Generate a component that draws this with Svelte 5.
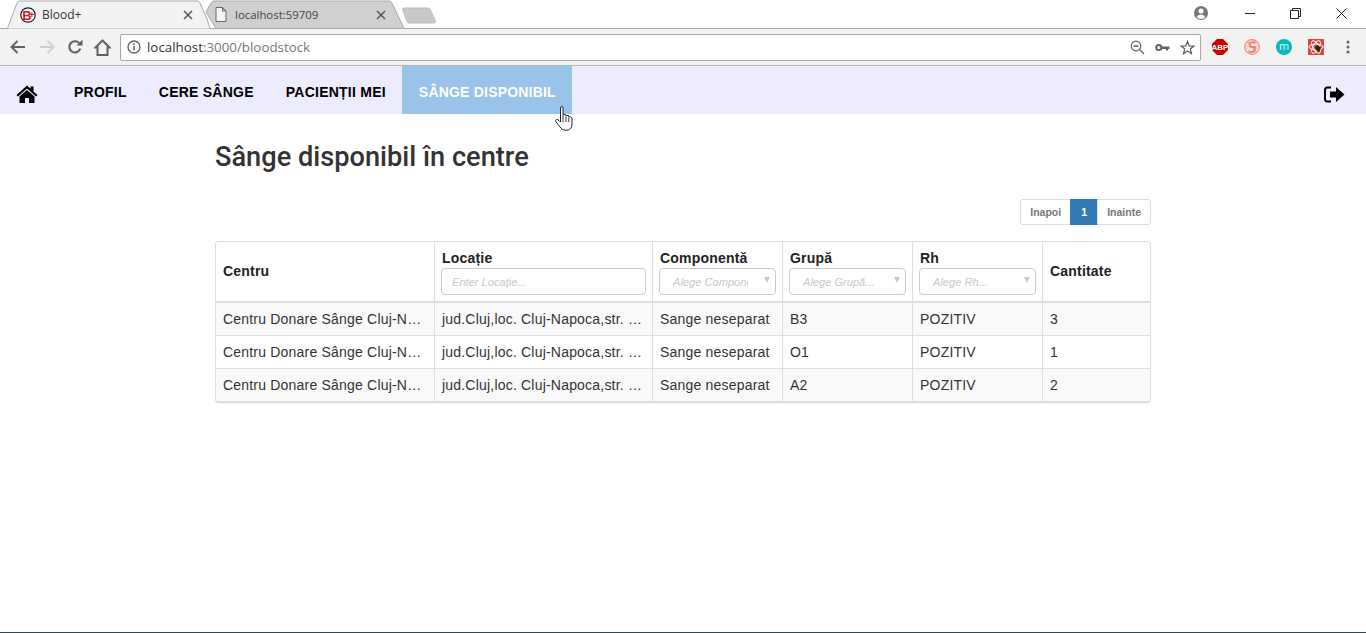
<script>
  const rows = [
    { g: 'B3', q: '3' },
    { g: 'O1', q: '1' },
    { g: 'A2', q: '2' }
  ];
</script>

<div class="page">
  <div class="strip">
    <div class="tab first">
      <svg class="tabbg" width="206" height="29" viewBox="0 0 206 29"><path d="M0 28.5H1.5L11 3Q12 1 14 1H191Q193 1 194 3L201 19L204 28.5H206" fill="#f2f2f2" stroke="#a8a8a8"/></svg>
      <svg class="fav" width="16" height="16" viewBox="0 0 16 16"><circle cx="8" cy="8" r="7.200" fill="#fff" stroke="#1a1a1a" stroke-width="1.200"/><text x="2.200" y="12.500" class="favb">B</text><text x="9.200" y="11" class="favp">+</text></svg>
      <span class="title">Blood+</span>
      <svg class="close" width="10" height="10" viewBox="0 0 10 10"><path d="M1 1L9 9M9 1L1 9" stroke="#555" stroke-width="1.5"/></svg>
    </div>
    <div class="tab second">
      <svg class="tabbg" width="204" height="29" viewBox="0 0 204 29"><path d="M3 12L8 3Q9 1 11 1H186Q188 1 189 3L201 28.5H13Z" fill="#cfcfcf" stroke="#a8a8a8"/></svg>
      <svg class="fav doc" width="12" height="15" viewBox="0 0 12 15"><path d="M1 .5H7.5L11 4V14.5H1ZM7.5 .5V4H11" fill="#f4f4f4" stroke="#666"/></svg>
      <span class="title">localhost:59709</span>
      <svg class="close" width="10" height="10" viewBox="0 0 10 10"><path d="M1 1L9 9M9 1L1 9" stroke="#555" stroke-width="1.5"/></svg>
    </div>
    <svg class="newtab" width="36" height="17" viewBox="0 0 36 17"><path d="M1.5 2Q1.5 1 3 1H27Q28.500 1 29 2L34.500 14Q35 16 33 16H8Q6.500 16 6 15Z" fill="#c9c9c9" stroke="#bdbdbd"/></svg>
    <div class="winctl">
      <svg class="acct" width="16" height="16" viewBox="0 0 16 16"><circle cx="8" cy="8" r="7" fill="#777"/><circle cx="8" cy="6" r="2.500" fill="#fff"/><path d="M3.500 12Q5 9.500 8 9.500T12.500 12Q10.500 14 8 14T3.500 12Z" fill="#fff"/></svg>
      <svg class="min" width="11" height="11" viewBox="0 0 11 11"><path d="M0 5.500H10" stroke="#222"/></svg>
      <svg class="max" width="11" height="11" viewBox="0 0 11 11"><path d="M.5 2.500H8.500V10.500H.5ZM2.500 2.500V.5H10.500V8.500H8.500" fill="none" stroke="#222"/></svg>
      <svg class="x" width="11" height="11" viewBox="0 0 11 11"><path d="M.5 .5L10.500 10.500M10.500 .5L.5 10.500" stroke="#222"/></svg>
    </div>
  </div>

  <div class="toolbar">
    <svg class="back" width="16" height="14" viewBox="0 0 16 14"><path d="M15 7H2M7.500 1L1.500 7L7.500 13" fill="none" stroke="#5f6368" stroke-width="2"/></svg>
    <svg class="fwd" width="16" height="14" viewBox="0 0 16 14"><path d="M1 7H14M8.500 1L14.500 7L8.500 13" fill="none" stroke="#cfcfcf" stroke-width="2"/></svg>
    <svg class="reload" width="16" height="16" viewBox="0 0 16 16"><path d="M13.300 9.500A5.600 5.600 0 1 1 12 4" fill="none" stroke="#5f6368" stroke-width="2.200"/><path d="M9.500 6.500H15.500V.5Z" fill="#5f6368"/></svg>
    <svg class="home" width="17" height="17" viewBox="0 0 17 17"><path d="M8.500 1.500L15.500 8.500H13.500V16H3.500V8.500H1.500Z" fill="none" stroke="#5f6368" stroke-width="2" stroke-linejoin="miter"/></svg>
    <div class="omni">
      <svg class="info" width="14" height="14" viewBox="0 0 14 14"><circle cx="7" cy="7" r="6" fill="none" stroke="#5f6368" stroke-width="1.300"/><path d="M7 6V10.500M7 3.300V5" stroke="#5f6368" stroke-width="1.500"/></svg>
      <span class="url"><b>localhost</b>:3000/bloodstock</span>
      <svg class="zoomout" width="15" height="15" viewBox="0 0 15 15"><circle cx="6" cy="6" r="4.800" fill="none" stroke="#5f6368" stroke-width="1.200"/><path d="M3.500 6H8.500M9.500 9.500L14 14" stroke="#5f6368" stroke-width="1.300"/></svg>
      <svg class="key" width="15" height="9" viewBox="0 0 15 9"><circle cx="3.800" cy="4.500" r="2.600" fill="none" stroke="#5f6368" stroke-width="2"/><path d="M6 3.500H14.500V6H13V7.500H11V6H6Z" fill="#5f6368"/></svg>
      <svg class="star" width="15" height="15" viewBox="0 0 15 15"><path d="M7.500 1.500L9.200 5.800L13.800 6.100L10.300 9L11.400 13.500L7.500 11L3.600 13.500L4.700 9L1.200 6.100L5.800 5.800Z" fill="none" stroke="#5f6368" stroke-width="1.300"/></svg>
    </div>
    <svg class="ext abp" width="16" height="16" viewBox="0 0 16 16"><path d="M5 0H11L16 5V11L11 16H5L0 11V5Z" fill="#c00"/><text x="8" y="10.800" text-anchor="middle" class="abptext">ABP</text></svg>
    <svg class="ext" width="16" height="16" viewBox="0 0 16 16"><circle cx="8" cy="8" r="7.300" fill="#fde4df" stroke="#ee8878" stroke-width="1.200"/><circle cx="8" cy="8" r="5" fill="none" stroke="#f6b9ae" stroke-width=".8"/><path d="M11.500 3.500Q6 2.500 5.500 5.500T9 8T10 12Q8 14 4.500 12.500" fill="none" stroke="#ee7c6c" stroke-width="1.800"/><path d="M4 3L12 13" stroke="#ee8878"/></svg>
    <svg class="ext" width="16" height="16" viewBox="0 0 16 16"><circle cx="8" cy="8" r="8" fill="#0bb8b8"/><text x="8" y="11" text-anchor="middle" class="mtext">m</text></svg>
    <svg class="ext" width="16" height="16" viewBox="0 0 16 16"><rect width="16" height="16" fill="#da4a36"/><g fill="none" stroke="#fff" stroke-width="1"><ellipse cx="8" cy="8" rx="7" ry="3"/><ellipse cx="8" cy="8" rx="7" ry="3" transform="rotate(60 8 8)"/><ellipse cx="8" cy="8" rx="7" ry="3" transform="rotate(120 8 8)"/></g><path d="M7 8L10 6L13 9L11 13L8 11Z" fill="#2a2320"/></svg>
    <svg class="menu" width="4" height="14" viewBox="0 0 4 14"><circle cx="2" cy="2" r="1.500" fill="#5f6368"/><circle cx="2" cy="7" r="1.500" fill="#5f6368"/><circle cx="2" cy="12" r="1.500" fill="#5f6368"/></svg>
  </div>

  <nav class="nav">
    <a class="homelink" href="#top" aria-label="Acasă">
      <svg width="22" height="18" viewBox="0 0 22 18"><path d="M11 .5L14.500 3.700V1.500H17.500V6.400L21.500 10L20 11.500L11 3.500L2 11.500L.5 10Z" fill="#000"/><path d="M11 5L18.500 11.500V18H13V13H9V18H3.500V11.500Z" fill="#000"/></svg>
    </a>
    <a href="#top">PROFIL</a>
    <a href="#top">CERE SÂNGE</a>
    <a href="#top">PACIENȚII MEI</a>
    <a class="active" href="#top">SÂNGE DISPONIBIL</a>
    <a class="logout" href="#top" aria-label="Ieșire">
      <svg width="21" height="17" viewBox="0 0 21 17"><path d="M7 1.500H3.500Q1 1.500 1 4V13Q1 15.500 3.500 15.500H7" fill="none" stroke="#000" stroke-width="2"/><path d="M6 5.500H12V1L20.500 8.500L12 16V11.500H6Z" fill="#000"/></svg>
    </a>
    <svg class="cursor" width="18" height="25" viewBox="0 0 18 25"><path d="M5.500 2Q5.500 .5 6.800 .5T8 2V9.500Q8.500 8 10 8.500T11 10Q11.500 9 13 9.500T13.800 11Q14.500 10.500 15.800 11T17 13V18Q17 24 11 24.300Q7 24.500 5 21L.8 15.500Q.2 14 1.500 13.500T4 14.500L5.500 16Z" fill="#fff" stroke="#1c2230" stroke-width="1"/><path d="M8 10V16M11 10.500V16M13.800 11.500V16" stroke="#1c2230" stroke-width=".9"/></svg>
  </nav>

  <main class="content">
    <h1>Sânge disponibil în centre</h1>
    <div class="pager">
      <span class="pg">Inapoi</span><span class="pg on">1</span><span class="pg">Inainte</span>
    </div>
    <div class="tablewrap">
      <table>
        <colgroup>
          <col class="c1" /><col class="c1" /><col class="c3" /><col class="c3" /><col class="c3" /><col class="c6" />
        </colgroup>
        <thead>
          <tr>
            <th>Centru</th>
            <th class="f">Locație<div class="filter"><span class="ph">Enter Locație...</span></div></th>
            <th class="f">Componentă<div class="filter sel"><span class="ph clip">Alege Component</span><i></i></div></th>
            <th class="f">Grupă<div class="filter sel"><span class="ph">Alege Grupă...</span><i></i></div></th>
            <th class="f">Rh<div class="filter sel"><span class="ph">Alege Rh...</span><i></i></div></th>
            <th>Cantitate</th>
          </tr>
        </thead>
        <tbody>
          {#each rows as r}
            <tr>
              <td>Centru Donare Sânge Cluj-Napoca</td>
              <td>jud.Cluj,loc. Cluj-Napoca,str. Nicolae Balcescu</td>
              <td>Sange neseparat</td>
              <td>{r.g}</td>
              <td>POZITIV</td>
              <td>{r.q}</td>
            </tr>
          {/each}
        </tbody>
      </table>
    </div>
  </main>
  <div class="bottomline"></div>
</div>

<style>
  :global(body) { margin: 0; background: #fff; }
  .page { height: 633px; display: flex; flex-direction: column; overflow: hidden; font-family: "Liberation Sans", Arial, sans-serif; color: #333; }

  .strip { height: 28px; background: #fff; border-bottom: 1px solid #a8a8a8; display: flex; position: relative; box-sizing: content-box; padding-left: 6px; flex: none; }
  .tab { position: relative; height: 28px; display: flex; align-items: center; font: 12px "Open Sans", "Noto Sans", sans-serif; color: #333; flex: none; }
  .tabbg { position: absolute; left: 0; top: 0; }
  .tab > :not(.tabbg) { position: relative; }
  .tab.first { width: 197px; z-index: 2; }
  .tab.second { width: 193px; }
  .fav { margin-left: 14px; margin-right: 6px; }
  .fav.doc { margin-left: 12px; margin-right: 8px; }
  .tab.first .fav { margin-top: 1px; }
  .favb { font: bold 13px "Liberation Sans", sans-serif; fill: #d3172c; }
  .favp { font: bold 9px "Liberation Sans", sans-serif; fill: #d3172c; }
  .title { flex: 1; white-space: nowrap; }
  .tab.second .title { font-size: 11.400px; color: #444; }
  .close { margin-right: 10px; margin-top: 1px; }
  .newtab { margin: 7px 0 0 5px; flex: none; }
  .winctl { margin-left: auto; display: flex; align-items: center; height: 26px; }
  .acct { margin-right: 36px; }
  .min { margin-right: 34px; }
  .max { margin-right: 35px; }
  .x { margin-right: 19px; }

  .toolbar { height: 36px; background: #f2f2f2; border-bottom: 1px solid #b5b5b5; display: flex; align-items: center; padding-left: 10px; box-sizing: content-box; flex: none; }
  .toolbar > svg { flex: none; }
  .fwd { margin-left: 13px; }
  .reload { margin-left: 12px; }
  .home { margin-left: 11px; }
  .omni { flex: none; width: 1068px; margin-left: 9px; height: 25px; background: #fff; border: 1px solid #a9a9a9; border-radius: 2px; display: flex; align-items: center; padding: 0 5px 0 6px; box-sizing: content-box; }
  .url { flex: 1; margin-left: 6px; font: 13.350px "Open Sans", "Noto Sans", sans-serif; color: #777; white-space: nowrap; }
  .url b { font-weight: 400; color: #333; }
  .zoomout { margin-right: 10px; }
  .key { margin-right: 10px; }
  .ext { margin-left: 16px; }
  .abp { margin-left: 11px; }
  .abptext { font: bold 8px "Liberation Sans", sans-serif; fill: #fff; }
  .mtext { font: 11px "Open Sans", sans-serif; fill: #d8fbfb; }
  .menu { margin-left: 22px; }

  .nav { height: 48px; background: #edecfe; display: flex; align-items: stretch; position: relative; flex: none; }
  .nav a { display: flex; align-items: center; padding: 3px 16px 0; color: #000; font-weight: 700; font-size: 14px; letter-spacing: .24px; text-decoration: none; white-space: nowrap; }
  .nav a.homelink { padding: 8px 20px 0 16px; }
  .nav a.active { background: #99c3e9; color: #fff; padding: 3px 16px 0 17px; letter-spacing: .2px; }
  .nav a.logout { margin-left: auto; padding: 8px 21px 0 0; }
  .cursor { position: absolute; left: 555px; top: 40px; }

  .content { width: 936px; margin: 0 auto; flex: 1; }
  h1 { margin: 28px 0 0; font: 500 27.200px/30px Roboto, sans-serif; color: #333; }
  .pager { display: flex; justify-content: flex-end; margin-top: 27px; height: 26px; font-size: 10.500px; font-weight: 700; color: #777; }
  .pg { box-sizing: border-box; height: 26px; padding: 0 9px; border: 1px solid #ddd; margin-left: -1px; display: flex; align-items: center; background: #fff; }
  .pg:first-child { border-radius: 3px 0 0 3px; }
  .pg:last-child { border-radius: 0 3px 3px 0; }
  .pg.on { background: #337ab7; border-color: #337ab7; color: #fff; width: 28px; justify-content: center; padding: 0; }
  .tablewrap { margin-top: 16px; border: 1px solid #ddd; border-bottom-width: 2px; border-radius: 4px; overflow: hidden; box-shadow: 0 1px 1px rgba(0,0,0,.05); box-sizing: border-box; height: 162px; }
  table { width: 934px; border-collapse: separate; border-spacing: 0; table-layout: fixed; font-size: 14px; letter-spacing: .2px; }
  .c1 { width: 218px; }
  .c3 { width: 130px; }
  .c6 { width: 108px; }
  th, td { box-sizing: border-box; padding: 0 6px 0 7px; border-left: 1px solid #ddd; text-align: left; overflow: hidden; text-overflow: ellipsis; white-space: nowrap; color: #333; }
  th:first-child, td:first-child { border-left: 0; }
  th { height: 61px; border-bottom: 2px solid #ddd; color: #222; font-weight: 700; padding-bottom: 2px; }
  th.f { padding-bottom: 0; padding-top: 2px; }
  td { height: 33px; border-top: 1px solid #ddd; padding-bottom: 1px; }
  tbody tr:first-child td { border-top: 0; height: 32px; }
  tbody tr:nth-child(odd) td { background: #f9f9f9; }
  .filter { position: relative; margin: 2px 0 0 -1px; height: 27px; box-sizing: border-box; border: 1px solid #ccc; border-radius: 4px; display: flex; align-items: center; padding: 1px 0 0 10px; background: #fff; font-weight: 400; font-size: 11.100px; font-style: italic; color: #c8c8c8; overflow: hidden; letter-spacing: 0; }
  .filter.sel { padding-left: 13px; }
  .ph { overflow: hidden; white-space: nowrap; }
  .ph.clip { width: 75px; }
  .filter i { position: absolute; right: 5px; top: 8px; width: 0; height: 0; border: 3px solid transparent; border-top: 6px solid #c8c8c8; }
  .bottomline { height: 1px; background: #37474f; flex: none; }
</style>
